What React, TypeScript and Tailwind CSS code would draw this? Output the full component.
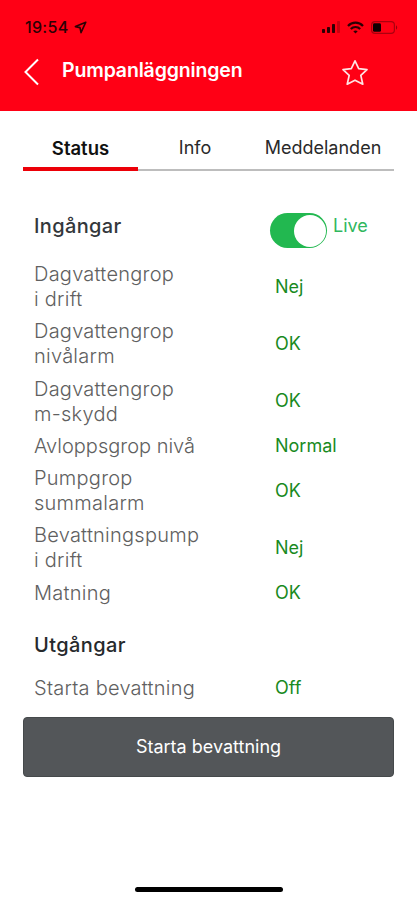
import React, { useState } from 'react';
import { clsx } from 'clsx';

type Signal = {
  label: string[];
  value: string;
  tight?: boolean;
};

const tabs = [
  { name: 'Status', width: 'w-[115px]' },
  { name: 'Info', width: 'w-[114px]' },
  { name: 'Meddelanden', width: 'w-[142px]' },
];

const inputs: Signal[] = [
  { label: ['Dagvattengrop', 'i drift'], value: 'Nej' },
  { label: ['Dagvattengrop', 'nivålarm'], value: 'OK' },
  { label: ['Dagvattengrop', 'm-skydd'], value: 'OK' },
  { label: ['Avloppsgrop nivå'], value: 'Normal', tight: true },
  { label: ['Pumpgrop', 'summalarm'], value: 'OK' },
  { label: ['Bevattningspump', 'i drift'], value: 'Nej' },
  { label: ['Matning'], value: 'OK' },
];

const outputs: Signal[] = [{ label: ['Starta bevattning'], value: 'Off' }];

function StatusBar() {
  return (
    <div className="flex h-[54px] items-center justify-between pr-[19px] pl-[25px] text-[#2c0004]">
      <div className="flex items-center gap-1.5">
        <span className="text-[16px] leading-5 font-medium tracking-[0.3px]">19:54</span>
        <svg width="13" height="13" viewBox="0 0 13 13" fill="none" stroke="currentColor" strokeWidth="1.6" strokeLinejoin="round">
          <path d="M11.8 1.2 L1.4 5.6 L6 6.6 L7 11.6 Z" />
        </svg>
      </div>
      <div className="flex items-center gap-[7px]">
        <svg width="18" height="12" viewBox="0 0 18 12" fill="currentColor">
          <rect x="0" y="8" width="3" height="4" rx="0.8" />
          <rect x="5" y="6" width="3" height="6" rx="0.8" />
          <rect x="10" y="3" width="3" height="9" rx="0.8" />
          <rect x="15" y="0" width="3" height="12" rx="0.8" opacity="0.25" />
        </svg>
        <svg width="17" height="13" viewBox="0 0 17 13" fill="none" stroke="currentColor" strokeWidth="2.2">
          <path d="M1 5 C5 0.6 12 0.6 16 5" />
          <path d="M3.8 8 C6.4 5.3 10.6 5.3 13.2 8" />
          <path d="M8.5 12.6 L6.3 10.3 C7.6 9.1 9.4 9.1 10.7 10.3 Z" fill="currentColor" stroke="none" />
        </svg>
        <svg width="27" height="13" viewBox="0 0 27 13" fill="none">
          <rect x="0.6" y="0.6" width="22.8" height="11.8" rx="3.4" stroke="currentColor" strokeWidth="1.2" opacity="0.4" />
          <rect x="2" y="2.2" width="8" height="8.6" rx="1.4" fill="#100002" />
          <path d="M25 4.3 C26.6 5 26.6 8 25 8.7 Z" fill="currentColor" opacity="0.5" />
        </svg>
      </div>
    </div>
  );
}

function SignalRow({ label, value, tight }: Signal) {
  return (
    <div className="flex items-center">
      <div
        className={clsx(
          'w-[241px] text-[20px] leading-[25px] font-light text-[#606060]',
          tight ? 'tracking-normal' : 'tracking-[0.25px]'
        )}
      >
        {label.map((line) => (
          <div key={line}>{line}</div>
        ))}
      </div>
      <span className="pb-px text-[18px] leading-[24px] text-[#198a1e]">{value}</span>
    </div>
  );
}

export default function App() {
  const [activeTab, setActiveTab] = useState('Status');
  const [live, setLive] = useState(true);

  return (
    <div className="flex h-[900px] w-[417px] flex-col overflow-hidden bg-white font-['Inter','Liberation_Sans',sans-serif]">
      <header className="h-[111px] bg-[#ff0015]">
        <StatusBar />
        <div className="flex h-9 items-center pl-6 text-white">
          <button className="w-[38px]">
            <svg width="16" height="28" viewBox="0 0 16 28" fill="none" stroke="currentColor" strokeWidth="2">
              <path d="M14 1.5 L1.5 14 L14 26.5" />
            </svg>
          </button>
          <h1 className="w-[279px] pb-1 text-[19.5px] leading-6 font-semibold tracking-[-0.15px]">Pumpanläggningen</h1>
          <button className="text-[#ffe4e4]">
            <svg width="28" height="27" viewBox="0 0 28 27" fill="none" stroke="currentColor" strokeWidth="1.7" strokeLinejoin="round">
              <path d="M14 1.8 L17.7 9.6 L26 10.6 L19.8 16.4 L21.8 25.2 L14 21.2 L6.2 25.2 L8.2 16.4 L2 10.6 L10.3 9.6 Z" />
            </svg>
          </button>
        </div>
      </header>

      <nav className="mx-[23px] mt-3 flex h-12">
        {tabs.map((tab) => (
          <button
            key={tab.name}
            onClick={() => setActiveTab(tab.name)}
            className={clsx(
              'flex items-end justify-center leading-6',
              tab.width,
              activeTab === tab.name
                ? 'border-b-4 border-[#ec0008] pb-[7px] text-[18.5px] font-semibold text-[#111]'
                : 'border-b-2 border-[#bdbdbd] pb-[9px] text-[18px] text-[#2a2a2a]'
            )}
          >
            {tab.name}
          </button>
        ))}
      </nav>

      <main className="mt-[42px] px-[34px]">
        <div className="flex h-[35px] items-start">
          <h2 className="w-[236px] pt-[1px] text-[20px] leading-[25px] font-medium tracking-[0.35px] text-[#33373b]">Ingångar</h2>
          <button
            role="switch"
            aria-checked={live}
            aria-label="Live"
            onClick={() => setLive(!live)}
            className={clsx('flex h-[35px] w-[57px] items-center rounded-full p-px', live ? 'justify-end bg-[#22b850]' : 'bg-gray-300')}
          >
            <span className="size-[32px] rounded-full bg-white" />
          </button>
          <span className="ml-1.5 text-[18px] leading-[25px] text-[#30b75d]">Live</span>
        </div>

        <section className="mt-[14px] flex flex-col gap-[7.3px]">
          {inputs.map((row) => (
            <SignalRow key={row.label.join(' ')} {...row} />
          ))}
        </section>

        <h2 className="mt-[27px] mb-[18px] text-[20px] leading-[25px] font-medium tracking-[0.4px] text-[#26292c]">Utgångar</h2>
        {outputs.map((row) => (
          <SignalRow key={row.label.join(' ')} {...row} />
        ))}
      </main>

      <button className="mx-[23px] mt-4 h-[60px] shrink-0 rounded-[4px] border border-[#45494b] bg-[#535659] text-[18px] text-white">
        Starta bevattning
      </button>

      <div className="mx-auto mt-auto mb-2 h-[5px] w-[148px] shrink-0 rounded-full bg-black" />
    </div>
  );
}
